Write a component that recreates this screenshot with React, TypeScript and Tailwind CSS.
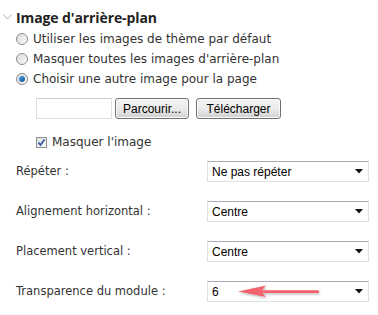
const verdana = { fontFamily: '"DejaVu Sans", Verdana, sans-serif' };

function Radio({ checked }: { checked?: boolean }) {
  return (
    <span className="relative w-[12px] h-[12px] rounded-full border border-[#8c8c8c] bg-gradient-to-br from-[#dcdcdc] to-[#fafafa] shrink-0 flex items-center justify-center">
      {checked && (
        <span className="w-[6px] h-[6px] rounded-full bg-gradient-to-br from-[#4fa8e8] to-[#0b4f99]" />
      )}
    </span>
  );
}

function Select({ value }: { value: string }) {
  return (
    <div className="w-[162px] h-[21px] border border-[#dde1e6] border-t-[#abadb3] bg-white flex items-center justify-between pl-[4px] pr-[5px] font-['Liberation_Sans',Arial,sans-serif] text-[12px] text-black">
      <span>{value}</span>
      <svg width="8" height="5" viewBox="0 0 8 5">
        <path d="M0 0h8L4 4.5z" fill="#111" />
      </svg>
    </div>
  );
}

function Button({ children, w }: { children: string; w: string }) {
  return (
    <button
      className={`${w} h-[21px] rounded-[3px] border border-[#707070] bg-gradient-to-b from-[#f2f2f2] via-[#ebebeb] to-[#cfcfcf] text-[12px] text-black font-['Liberation_Sans',Arial,sans-serif] shadow-[inset_0_0_0_1px_#fcfcfc]`}
    >
      {children}
    </button>
  );
}

function Row({ label, value }: { label: string; value: string }) {
  return (
    <div className="flex items-center justify-between h-[21px] pl-[16px] pr-[9px]">
      <span>{label}</span>
      <Select value={value} />
    </div>
  );
}

export default function App() {
  return (
    <div className="w-[378px] h-[315px] bg-white text-[#333] text-[11.5px] overflow-hidden" style={verdana}>
      <div className="flex items-center pt-[9px] h-[25px]">
        <svg className="ml-[3px] mr-[4px]" width="9" height="6" viewBox="0 0 9 6">
          <path d="M0.5 0.5L4.5 5L8.5 0.5" fill="none" stroke="#b0b0b0" strokeWidth="1" />
        </svg>
        <span className="text-[14px] font-bold text-[#222] font-['Open_Sans',sans-serif] tracking-[-0.1px]">Image d'arrière-plan</span>
      </div>
      <div className="flex flex-col mt-[4px] pl-[16px]">
        {[
          ['Utiliser les images de thème par défaut', false],
          ['Masquer toutes les images d\'arrière-plan', false],
          ['Choisir une autre image pour la page', true],
        ].map(([t, c]) => (
          <label key={t as string} className="flex items-center gap-[5px] h-[20px]">
            <Radio checked={c as boolean} />
            <span className="text-[12px]">{t as string}</span>
          </label>
        ))}
      </div>
      <div className="flex items-center mt-[9px] pl-[36px] h-[21px]">
        <div className="w-[76px] h-[21px] border border-[#dcdfe3] border-t-[#c9ccd1] bg-white" />
        <Button w="w-[74px] ml-[3px]">Parcourir...</Button>
        <Button w="w-[85px] ml-[7px]">Télécharger</Button>
      </div>
      <label className="flex items-center gap-[5px] pl-[36px] mt-[17px] h-[12px]">
        <span className="w-[11px] h-[11px] border border-[#8e8f8f] bg-gradient-to-br from-[#dedede] to-[#fbfbfb] flex items-center justify-center">
          <svg width="9" height="9" viewBox="0 0 9 9">
            <path d="M1.5 4.5L3.5 7L7.5 1.5" fill="none" stroke="#3d58a8" strokeWidth="1.8" />
          </svg>
        </span>
        <span className="text-[12px]">Masquer l'image</span>
      </label>
      <div className="flex flex-col gap-[19px] mt-[13px]">
        <Row label="Répéter :" value="Ne pas répéter" />
        <Row label="Alignement horizontal :" value="Centre" />
        <Row label="Placement vertical :" value="Centre" />
        <div className="relative">
          <Row label="Transparence du module :" value="6" />
          <svg className="absolute left-[236px] top-[2px]" width="88" height="18" viewBox="0 0 88 18">
            <defs>
              <filter id="sh" x="-10%" y="-50%" width="120%" height="200%">
                <feDropShadow dx="1" dy="1.5" stdDeviation="1.2" floodColor="#000" floodOpacity="0.25" />
              </filter>
            </defs>
            <g filter="url(#sh)" fill="#f2646e">
              <path d="M2 8.5L30 2.5L25 8.5L30 14Z" />
              <rect x="24" y="7.2" width="59" height="2.8" rx="1.2" />
            </g>
          </svg>
        </div>
      </div>
    </div>
  );
}
